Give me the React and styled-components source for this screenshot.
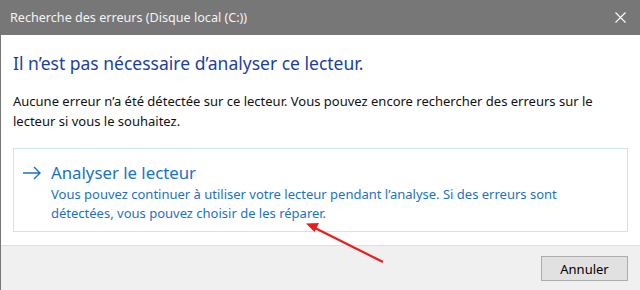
import React from "react";
import styled, { createGlobalStyle } from "styled-components";

const Global = createGlobalStyle`
  html, body { margin: 0; padding: 0; background: #ffffff; }
  body { font-family: "Noto Sans", "Open Sans", sans-serif; }
  * { box-sizing: border-box; }
`;

const Window = styled.div`
  position: relative;
  width: 640px;
  height: 290px;
  display: flex;
  flex-direction: column;
  border-left: 1px solid #777777;
  overflow: hidden;
`;

const TitleBar = styled.div`
  height: 35px;
  flex: none;
  background: #777777;
  color: #f4f4f4;
  display: flex;
  align-items: center;
  justify-content: space-between;
  padding: 0 14px 0 9px;
  font-size: 12.6px;
`;

const CloseIcon = styled.svg`
  width: 11px;
  height: 11px;
  display: block;
`;

const Content = styled.div`
  flex: 1;
  background: #ffffff;
  padding: 17px 12px 0 12px;
  display: flex;
  flex-direction: column;
`;

const Heading = styled.div`
  font-size: 17.5px;
  line-height: 22px;
  color: #1c3f9f;
`;

const Body = styled.p`
  margin: 17px 0 0 0;
  font-size: 13px;
  line-height: 20px;
  color: #111111;
`;

const CommandLink = styled.div`
  margin-top: 17px;
  border: 1px solid #cfe3f5;
  padding: 12px 10px 8px 8px;
  display: grid;
  grid-template-columns: 29px 1fr;
  color: #1a72c9;
`;

const ArrowIcon = styled.svg`
  width: 20px;
  height: 14px;
  margin-top: 5px;
  display: block;
`;

const LinkTitle = styled.div`
  font-size: 16.8px;
  line-height: 24px;
`;

const LinkText = styled.div`
  font-size: 13px;
  line-height: 19px;
`;

const Footer = styled.div`
  height: 45px;
  flex: none;
  background: #f0f0f0;
  border-top: 1px solid #dfdfdf;
  display: flex;
  justify-content: flex-end;
  align-items: flex-start;
  padding: 10px 12px 0 0;
`;

const Button = styled.button`
  width: 87px;
  height: 25px;
  background: #e1e1e1;
  border: 1px solid #adadad;
  font-family: "Noto Sans", "Open Sans", sans-serif;
  font-size: 13px;
  color: #000000;
  padding: 0;
`;

const Annotation = styled.svg`
  position: absolute;
  left: 0;
  top: 0;
  pointer-events: none;
`;

export default function App() {
  return (
    <>
      <Global />
      <Window>
        <TitleBar>
          <span>Recherche des erreurs (Disque local (C:))</span>
          <CloseIcon viewBox="0 0 11 11">
            <path d="M0.5 0.5 L10.5 10.5 M10.5 0.5 L0.5 10.5" stroke="#ffffff" strokeWidth="1.1" fill="none" />
          </CloseIcon>
        </TitleBar>
        <Content>
          <Heading>Il n’est pas nécessaire d’analyser ce lecteur.</Heading>
          <Body>
            Aucune erreur n’a été détectée sur ce lecteur. Vous pouvez encore rechercher des erreurs sur le lecteur si vous le souhaitez.
          </Body>
          <CommandLink>
            <ArrowIcon viewBox="0 0 20 14">
              <path d="M1 7 H18 M12 1 L18 7 L12 13" stroke="#1a72c9" strokeWidth="1.4" fill="none" />
            </ArrowIcon>
            <div>
              <LinkTitle>Analyser le lecteur</LinkTitle>
              <LinkText>
                Vous pouvez continuer à utiliser votre lecteur pendant l’analyse. Si des erreurs sont détectées, vous pouvez choisir de les réparer.
              </LinkText>
            </div>
          </CommandLink>
        </Content>
        <Footer>
          <Button>Annuler</Button>
        </Footer>
        <Annotation width="640" height="290" viewBox="0 0 640 290">
          <path d="M382 262 L312 227" stroke="#ee1c1c" strokeWidth="2.2" fill="none" />
          <path d="M305 223.5 L318 223 L313.5 232 Z" fill="#ee1c1c" />
        </Annotation>
      </Window>
    </>
  );
}
